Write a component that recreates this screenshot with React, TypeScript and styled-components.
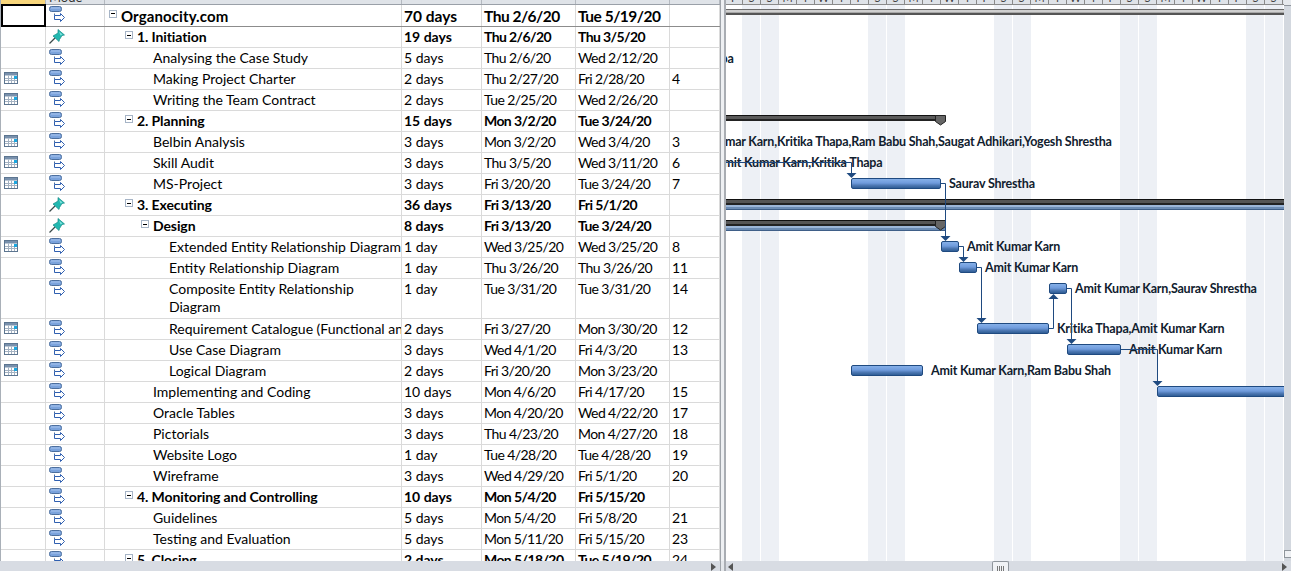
import { createGlobalStyle } from "styled-components";
import styled from "styled-components";

const GlobalStyle = createGlobalStyle`
  html, body {
    margin: 0;
    padding: 0;
    background: #fff;
    overflow: hidden;
  }
  * {
    box-sizing: border-box;
  }
`;

// gantt canvas starts here on the page, everything on it is given in page coords
const CANVAS_X = 726;
const CANVAS_Y = 5;

type Task = {
  name: string;
  level: number;
  duration: string;
  start: string;
  finish: string;
  pred?: string;
  bold?: boolean;
  toggle?: boolean;
  pin?: boolean;
  cal?: boolean;
  tall?: boolean;
};

const tasks: Task[] = [
  { name: "Organocity.com", level: 0, duration: "70 days", start: "Thu 2/6/20", finish: "Tue 5/19/20", bold: true, toggle: true },
  { name: "1. Initiation", level: 1, duration: "19 days", start: "Thu 2/6/20", finish: "Thu 3/5/20", bold: true, toggle: true, pin: true },
  { name: "Analysing the Case Study", level: 2, duration: "5 days", start: "Thu 2/6/20", finish: "Wed 2/12/20" },
  { name: "Making Project Charter", level: 2, duration: "2 days", start: "Thu 2/27/20", finish: "Fri 2/28/20", pred: "4", cal: true },
  { name: "Writing the Team Contract", level: 2, duration: "2 days", start: "Tue 2/25/20", finish: "Wed 2/26/20", cal: true },
  { name: "2. Planning", level: 1, duration: "15 days", start: "Mon 3/2/20", finish: "Tue 3/24/20", bold: true, toggle: true },
  { name: "Belbin Analysis", level: 2, duration: "3 days", start: "Mon 3/2/20", finish: "Wed 3/4/20", pred: "3", cal: true },
  { name: "Skill Audit", level: 2, duration: "3 days", start: "Thu 3/5/20", finish: "Wed 3/11/20", pred: "6", cal: true },
  { name: "MS-Project", level: 2, duration: "3 days", start: "Fri 3/20/20", finish: "Tue 3/24/20", pred: "7", cal: true },
  { name: "3. Executing", level: 1, duration: "36 days", start: "Fri 3/13/20", finish: "Fri 5/1/20", bold: true, toggle: true, pin: true },
  { name: "Design", level: 2, duration: "8 days", start: "Fri 3/13/20", finish: "Tue 3/24/20", bold: true, toggle: true, pin: true },
  { name: "Extended Entity Relationship Diagram", level: 3, duration: "1 day", start: "Wed 3/25/20", finish: "Wed 3/25/20", pred: "8", cal: true },
  { name: "Entity Relationship Diagram", level: 3, duration: "1 day", start: "Thu 3/26/20", finish: "Thu 3/26/20", pred: "11" },
  { name: "Composite Entity Relationship Diagram", level: 3, duration: "1 day", start: "Tue 3/31/20", finish: "Tue 3/31/20", pred: "14", tall: true },
  { name: "Requirement Catalogue (Functional and Non-Functional)", level: 3, duration: "2 days", start: "Fri 3/27/20", finish: "Mon 3/30/20", pred: "12", cal: true },
  { name: "Use Case Diagram", level: 3, duration: "3 days", start: "Wed 4/1/20", finish: "Fri 4/3/20", pred: "13", cal: true },
  { name: "Logical Diagram", level: 3, duration: "2 days", start: "Fri 3/20/20", finish: "Mon 3/23/20", cal: true },
  { name: "Implementing and Coding", level: 2, duration: "10 days", start: "Mon 4/6/20", finish: "Fri 4/17/20", pred: "15" },
  { name: "Oracle Tables", level: 2, duration: "3 days", start: "Mon 4/20/20", finish: "Wed 4/22/20", pred: "17" },
  { name: "Pictorials", level: 2, duration: "3 days", start: "Thu 4/23/20", finish: "Mon 4/27/20", pred: "18" },
  { name: "Website Logo", level: 2, duration: "1 day", start: "Tue 4/28/20", finish: "Tue 4/28/20", pred: "19" },
  { name: "Wireframe", level: 2, duration: "3 days", start: "Wed 4/29/20", finish: "Fri 5/1/20", pred: "20" },
  { name: "4. Monitoring and Controlling", level: 1, duration: "10 days", start: "Mon 5/4/20", finish: "Fri 5/15/20", bold: true, toggle: true },
  { name: "Guidelines", level: 2, duration: "5 days", start: "Mon 5/4/20", finish: "Fri 5/8/20", pred: "21" },
  { name: "Testing and Evaluation", level: 2, duration: "5 days", start: "Mon 5/11/20", finish: "Fri 5/15/20", pred: "23" },
  { name: "5. Closing", level: 1, duration: "2 days", start: "Mon 5/18/20", finish: "Tue 5/19/20", pred: "24", bold: true, toggle: true },
];

const bars = [
  { x: 851, w: 90, y: 178 },
  { x: 941, w: 18, y: 241 },
  { x: 959, w: 18, y: 262 },
  { x: 1049, w: 18, y: 283 },
  { x: 977, w: 72, y: 323 },
  { x: 1067, w: 54, y: 344 },
  { x: 851, w: 72, y: 365 },
  { x: 1157, w: 130, y: 386 },
];

const labels = [
  { x: 662, y: 50, text: "Kritika Thapa" },
  { x: 681, y: 133, text: "Amit Kumar Karn,Kritika Thapa,Ram Babu Shah,Saugat Adhikari,Yogesh Shrestha" },
  { x: 715, y: 154, text: "Amit Kumar Karn,Kritika Thapa" },
  { x: 949, y: 175, text: "Saurav Shrestha" },
  { x: 967, y: 238, text: "Amit Kumar Karn" },
  { x: 985, y: 259, text: "Amit Kumar Karn" },
  { x: 1075, y: 280, text: "Amit Kumar Karn,Saurav Shrestha" },
  { x: 1057, y: 320, text: "Kritika Thapa,Amit Kumar Karn" },
  { x: 1129, y: 341, text: "Amit Kumar Karn" },
  { x: 931, y: 362, text: "Amit Kumar Karn,Ram Babu Shah" },
];

// link lines between bars, page coords
const links = [
  { d: "M726 162.5H851.5V175", ax: 851.5, ay: 178, up: false },
  { d: "M941 183.5H945.5V237", ax: 945.5, ay: 241, up: false },
  { d: "M959 246.5H963.5V258", ax: 963.5, ay: 262, up: false },
  { d: "M977 267.5H981.5V319", ax: 981.5, ay: 323, up: false },
  { d: "M1049 328.5H1053.5V298", ax: 1053.5, ay: 294, up: true },
  { d: "M1067 288.5H1071.5V340", ax: 1071.5, ay: 344, up: false },
  { d: "M1121 349.5H1157.5V382", ax: 1157.5, ay: 386, up: false },
];

const dayLetters = ["F", "S", "S", "M", "T", "W", "T"];
const days = Array.from({ length: 31 }, (_, i) => dayLetters[i % 7]);

const Page = styled.div`
  width: 1291px;
  height: 571px;
  display: flex;
  flex-direction: column;
  overflow: hidden;
  font-family: Lato, "Open Sans", sans-serif;
  font-size: 14px;
  color: #000;
`;

const Main = styled.div`
  display: flex;
  height: 561px;
  overflow: hidden;
`;

const TablePane = styled.div`
  width: 720px;
  flex: none;
  overflow: hidden;
  border-left: 1px solid #a9b0b8;
`;

const HeaderRow = styled.div`
  display: grid;
  grid-template-columns: 45px 59px 297px 80px 94px 94px 50px;
  height: 5px;
  background: #dfe3e8;
  border-bottom: 1px solid #9aa0a8;
  overflow: hidden;
`;

const HeaderCell = styled.div<{ $active?: boolean }>`
  height: 4px;
  padding-left: 3px;
  border-right: 1px solid #b4b9c0;
  background: ${(p) => (p.$active ? "#f8d67c" : "transparent")};
  overflow: hidden;
  font-size: 13px;
  line-height: 14px;
  color: #333;
`;

const HeaderText = styled.div`
  margin-top: -10px;
`;

const Row = styled.div<{ $h: number; $strong?: boolean }>`
  display: grid;
  grid-template-columns: 45px 59px 297px 80px 94px 94px 50px;
  height: ${(p) => p.$h}px;
  border-bottom: 1px solid ${(p) => (p.$strong ? "#8c8c8c" : "#dadada")};
`;

const Cell = styled.div<{ $bold?: boolean; $top?: boolean; $tall?: boolean }>`
  display: flex;
  align-items: ${(p) => (p.$tall ? "flex-start" : "center")};
  padding: ${(p) => (p.$tall ? 1 : 0)}px 0 0 2px;
  border-right: 1px solid #dadada;
  overflow: hidden;
  white-space: nowrap;
  font-weight: ${(p) => (p.$bold ? 700 : 400)};
  font-size: ${(p) => (p.$top ? 15.5 : 14)}px;
  line-height: 18px;
`;

const DateCell = styled(Cell)`
  letter-spacing: ${(p) => (p.$top ? -0.5 : -0.6)}px;
`;

const IndicatorCell = styled.div<{ $selected?: boolean }>`
  display: flex;
  align-items: flex-start;
  padding: 3px 0 0 3px;
  border-right: 1px solid #dadada;
  ${(p) => p.$selected && "border: 2px solid #000; margin-top: -1px; margin-bottom: -1px; position: relative;"}
`;

const ModeCell = styled.div`
  padding: 1px 0 0 3px;
  border-right: 1px solid #dadada;
`;

const NameCell = styled.div<{ $level: number; $bold?: boolean; $top?: boolean; $tall?: boolean }>`
  display: flex;
  align-items: ${(p) => (p.$tall ? "flex-start" : "center")};
  padding-top: ${(p) => (p.$tall ? 1 : 0)}px;
  padding-left: ${(p) => 16 + p.$level * 16}px;
  padding-right: ${(p) => (p.$tall ? 30 : 0)}px;
  border-right: 1px solid #dadada;
  overflow: hidden;
  white-space: ${(p) => (p.$tall ? "normal" : "nowrap")};
  font-weight: ${(p) => (p.$bold ? 700 : 400)};
  font-size: ${(p) => (p.$top ? 15 : 14)}px;
  line-height: 18px;
  letter-spacing: ${(p) => (p.$top ? 0.1 : p.$bold ? -0.1 : 0)}px;
`;

const Toggle = styled.span`
  flex: none;
  width: 8px;
  height: 8px;
  margin: 0 4px 4px -12px;
  border: 1px solid #a6b4c6;
  background: linear-gradient(90deg, #000 0 0) center / 4px 1px no-repeat, #fff;
`;

const Splitter = styled.div`
  width: 6px;
  flex: none;
  background: #eef0f3;
  border-left: 1px solid #9fa4aa;
  border-right: 2px solid #a9adb3;
`;

const GanttPane = styled.div`
  flex: 1;
  display: flex;
  flex-direction: column;
  min-width: 0;
`;

const Timescale = styled.div`
  display: flex;
  height: 5px;
  flex: none;
  background: #dfe3e8;
  border-bottom: 1px solid #8a8a8a;
  overflow: hidden;
`;

const DayCell = styled.div`
  width: 18px;
  height: 4px;
  flex: none;
  border-right: 1px solid #8a8a8a;
  overflow: hidden;
  text-align: center;
  font-size: 11px;
  line-height: 12px;
  color: #444;

  &:first-child {
    width: 17px;
  }
`;

const DayText = styled.div`
  margin-top: -8px;
`;

const Canvas = styled.div`
  position: relative;
  flex: 1;
  overflow: hidden;
  background: repeating-linear-gradient(
    90deg,
    #fff 0 16px,
    #edf0f5 16px 34px,
    #fff 34px 35px,
    #edf0f5 35px 53px,
    #fff 53px 126px
  );
`;

const TaskBar = styled.div<{ $x: number; $y: number; $w: number }>`
  position: absolute;
  left: ${(p) => p.$x - CANVAS_X}px;
  top: ${(p) => p.$y - CANVAS_Y}px;
  width: ${(p) => p.$w}px;
  height: 11px;
  border: 1px solid #1f4a80;
  border-radius: 2px;
  background: linear-gradient(#86b0e8 0, #6f9bdc 45%, #4e79b4 70%, #2f5d95 100%);
`;

const BarLabel = styled.div<{ $x: number; $y: number }>`
  position: absolute;
  left: ${(p) => p.$x - CANVAS_X}px;
  top: ${(p) => p.$y - CANVAS_Y}px;
  white-space: nowrap;
  font-size: 12.5px;
  font-weight: 700;
  letter-spacing: -0.2px;
  line-height: 17px;
  color: #10202e;
`;

const ProjectBar = styled.div`
  position: absolute;
  left: 0;
  right: 0;
  top: 4px;
  height: 6px;
  background: linear-gradient(#6b6b6b 0 1px, #cfcfcf 1px 3px, #a8a8a8 3px 4px, #555 4px 6px);
`;

const SummaryBar = styled.div<{ $y: number; $w?: number; $blue?: boolean }>`
  position: absolute;
  left: 0;
  top: ${(p) => p.$y - CANVAS_Y}px;
  width: ${(p) => (p.$w ? `${p.$w}px` : "100%")};
  height: ${(p) => (p.$blue ? 11 : 6)}px;
  background: ${(p) =>
    p.$blue
      ? "linear-gradient(#111 0 1px, #555 1px 4px, #222 4px 6px, #9cb6d8 6px 8px, #6c8cb4 8px 10px, #3f5f88 10px 11px)"
      : "linear-gradient(#111 0 1px, #5a5a5a 1px 4px, #222 4px 6px)"};
`;

const SummaryEnd = styled.svg<{ $y: number }>`
  position: absolute;
  left: ${935 - CANVAS_X}px;
  top: ${(p) => p.$y - CANVAS_Y}px;
`;

const LinkLayer = styled.svg`
  position: absolute;
  left: 0;
  top: 0;
  pointer-events: none;
`;

const VScroll = styled.div`
  width: 7px;
  flex: none;
  display: flex;
  flex-direction: column;
  justify-content: space-between;
  background: #d3d8df;
`;

const VButton = styled.div`
  height: 6px;
  background: #e6e9ed;
  border-bottom: 1px solid #8f959c;
`;

const VThumb = styled.div`
  height: 8px;
  margin-bottom: 3px;
  background: #eef0f3;
  border: 1px solid #8f959c;
  border-right: none;
`;

const BottomBar = styled.div`
  display: flex;
  align-items: stretch;
  height: 10px;
  background: #d8dce3;
`;

const LeftScroll = styled.div`
  width: 720px;
  flex: none;
  display: flex;
  justify-content: flex-end;
  padding-right: 4px;
`;

const BottomSplit = styled.div`
  width: 6px;
  flex: none;
  border-left: 1px solid #9fa4aa;
  border-right: 2px solid #a9adb3;
  background: #e4e7eb;
`;

const RightScroll = styled.div`
  flex: 1;
  display: flex;
  align-items: stretch;
  padding: 0 4px 0 2px;
`;

const Thumb = styled.div`
  width: 17px;
  margin-left: 259px;
  margin-right: auto;
  border: 1px solid #8f959c;
  border-bottom: none;
  border-radius: 2px 2px 0 0;
  background: #f0f2f5;
  display: flex;
  justify-content: center;
  gap: 1px;
  padding-top: 4px;
`;

const Grip = styled.span`
  width: 1px;
  background: #777;
`;

const ArrowLeft = styled.span`
  width: 0;
  height: 0;
  margin-top: 2px;
  border-top: 4px solid transparent;
  border-bottom: 4px solid transparent;
  border-right: 5px solid #555;
`;

const ArrowRight = styled.span`
  width: 0;
  height: 0;
  margin-top: 2px;
  border-top: 4px solid transparent;
  border-bottom: 4px solid transparent;
  border-left: 5px solid #555;
`;

function ModeIcon() {
  return (
    <svg width="18" height="19" viewBox="0 0 18 19" style={{ display: "block" }}>
      <rect x="0.5" y="0.5" width="12" height="5" rx="2" fill="#7ba3dc" stroke="#4c6f9e" />
      <rect x="2" y="1.5" width="9" height="1" fill="#a9c6ee" />
      <path d="M5.5 7.5V9.5" stroke="#4c6f9e" fill="none" />
      <path d="M5.5 9.5H11.5V7.5L15.5 11.5L11.5 15.5V13.5H5.5Z" fill="#fff" stroke="#2f5fb0" />
    </svg>
  );
}

function PinIcon() {
  return (
    <svg width="18" height="19" viewBox="0 0 18 19" style={{ display: "block" }}>
      <path d="M0.5 15.5L6 10" stroke="#3a4a4a" strokeWidth="1.2" />
      <path d="M9 1.5L15.5 7L13 7.5L10.5 11.5L10 13.5L4 8L6.5 6.5L9 5Z" fill="#22b8b0" stroke="#158a86" strokeWidth="0.7" />
      <path d="M10 3.5L13.5 6.5L11.5 7.5Z" fill="#7fe3dc" />
    </svg>
  );
}

function CalendarIcon() {
  return (
    <svg width="14" height="12" viewBox="0 0 14 12" style={{ display: "block" }}>
      <rect x="0.5" y="0.5" width="13" height="11" fill="#fff" stroke="#5c7590" />
      <rect x="1" y="1" width="12" height="2.5" fill="#7890ac" />
      <path d="M4.5 3.5V11M7.5 3.5V11M10.5 3.5V11M1 6.5H13M1 8.5H13" stroke="#a4b2c2" fill="none" />
      <rect x="10" y="4" width="3" height="3" fill="#1aa7e0" />
    </svg>
  );
}

function App() {
  return (
    <>
      <GlobalStyle />
      <Page>
        <Main>
          <TablePane>
            <HeaderRow>
              <HeaderCell $active />
              <HeaderCell>
                <HeaderText>Mode</HeaderText>
              </HeaderCell>
              <HeaderCell />
              <HeaderCell />
              <HeaderCell />
              <HeaderCell />
              <HeaderCell />
            </HeaderRow>
            {tasks.map((t, i) => (
              <Row key={t.name} $h={i === 0 ? 22 : t.tall ? 40 : 21} $strong={i === 0}>
                <IndicatorCell $selected={i === 0}>{t.cal && <CalendarIcon />}</IndicatorCell>
                <ModeCell>{t.pin ? <PinIcon /> : <ModeIcon />}</ModeCell>
                <NameCell $level={t.level} $bold={t.bold} $top={i === 0} $tall={t.tall}>
                  {t.toggle && <Toggle />}
                  {t.name}
                </NameCell>
                <Cell $bold={t.bold} $top={i === 0} $tall={t.tall}>{t.duration}</Cell>
                <DateCell $bold={t.bold} $top={i === 0} $tall={t.tall}>{t.start}</DateCell>
                <DateCell $bold={t.bold} $top={i === 0} $tall={t.tall}>{t.finish}</DateCell>
                <Cell $tall={t.tall}>{t.pred}</Cell>
              </Row>
            ))}
          </TablePane>
          <Splitter />
          <GanttPane>
            <Timescale>
              {days.map((d, i) => (
                <DayCell key={i}>
                  <DayText>{d}</DayText>
                </DayCell>
              ))}
            </Timescale>
            <Canvas>
              <ProjectBar />
              <SummaryBar $y={115} $w={210} />
              <SummaryEnd $y={115} width="11" height="11" viewBox="0 0 11 11">
                <path d="M0.5 0.5H10.5V6.5L5.5 10L0.5 6.5Z" fill="#666" stroke="#222" />
              </SummaryEnd>
              <SummaryBar $y={199} $blue />
              <SummaryBar $y={220} $w={219} $blue />
              <SummaryEnd $y={220} width="11" height="11" viewBox="0 0 11 11">
                <path d="M0.5 0.5H10.5V6.5L5.5 10L0.5 6.5Z" fill="#666" stroke="#222" />
              </SummaryEnd>
              {labels.map((l) => (
                <BarLabel key={l.text + l.y} $x={l.x} $y={l.y}>
                  {l.text}
                </BarLabel>
              ))}
              {bars.map((b) => (
                <TaskBar key={b.y} $x={b.x} $y={b.y} $w={b.w} />
              ))}
              <LinkLayer
                width="565"
                height="556"
                viewBox={`${CANVAS_X} ${CANVAS_Y} 565 556`}
              >
                {links.map((l) => (
                  <g key={l.d}>
                    <path d={l.d} fill="none" stroke="#1f4a80" strokeWidth="1" />
                    <path
                      d={
                        l.up
                          ? `M${l.ax} ${l.ay}l-5 5h10Z`
                          : `M${l.ax} ${l.ay}l-5 -5h10Z`
                      }
                      fill="#1f4a80"
                    />
                  </g>
                ))}
              </LinkLayer>
            </Canvas>
          </GanttPane>
          <VScroll>
            <VButton />
            <VThumb />
          </VScroll>
        </Main>
        <BottomBar>
          <LeftScroll>
            <ArrowRight />
          </LeftScroll>
          <BottomSplit />
          <RightScroll>
            <ArrowLeft />
            <Thumb>
              <Grip />
              <Grip />
              <Grip />
              <Grip />
            </Thumb>
            <ArrowRight />
          </RightScroll>
        </BottomBar>
      </Page>
    </>
  );
}

export default App;
